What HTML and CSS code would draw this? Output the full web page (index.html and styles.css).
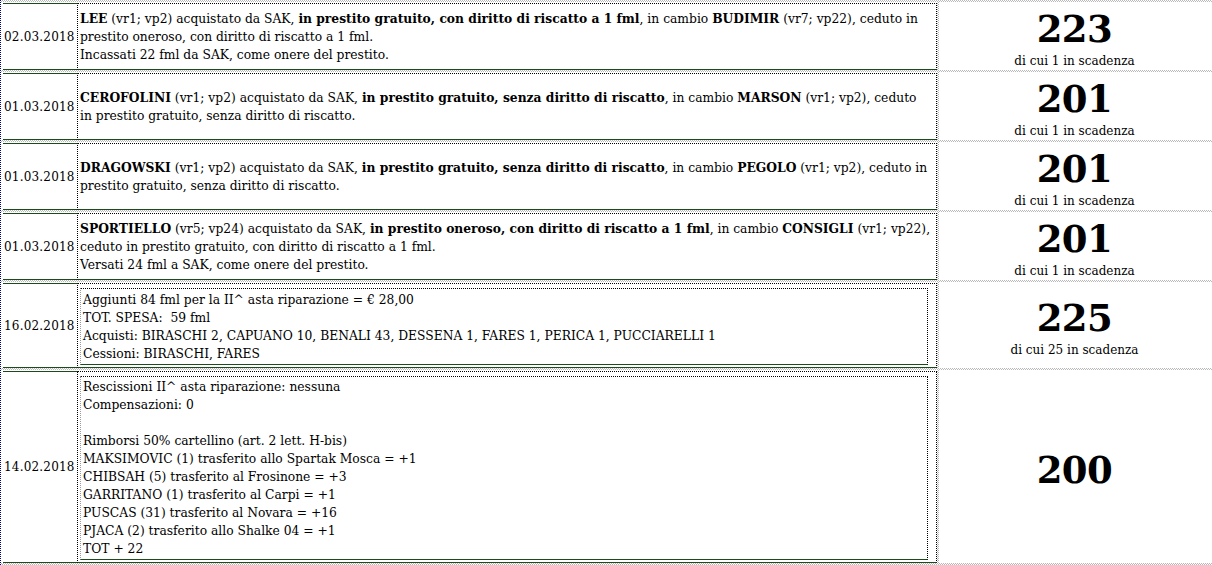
FILE: index.html
```html
<!DOCTYPE html>
<html lang="it">
<head>
<meta charset="utf-8">
<title>Movimenti</title>
<link rel="stylesheet" href="styles.css">
</head>
<body>
<div class="sheet">
  <div class="row r-std">
    <div class="date">02.03.2018</div>
    <div class="desc"><p><b>LEE</b> (vr1; vp2) acquistato da SAK, <b>in prestito gratuito, con diritto di riscatto a 1 fml</b>, in cambio <b>BUDIMIR</b> (vr7; vp22), ceduto in prestito oneroso, con diritto di riscatto a 1 fml.<br>Incassati 22 fml da SAK, come onere del prestito.</p></div>
    <div class="gap"></div>
    <div class="total"><div class="num">223</div><div class="sub">di cui 1 in scadenza</div></div>
  </div>
  <div class="row r-std">
    <div class="date">01.03.2018</div>
    <div class="desc"><p><b>CEROFOLINI</b> (vr1; vp2) acquistato da SAK, <b>in prestito gratuito, senza diritto di riscatto</b>, in cambio <b>MARSON</b> (vr1; vp2), ceduto<br>in prestito gratuito, senza diritto di riscatto.</p></div>
    <div class="gap"></div>
    <div class="total"><div class="num">201</div><div class="sub">di cui 1 in scadenza</div></div>
  </div>
  <div class="row r-std">
    <div class="date">01.03.2018</div>
    <div class="desc"><p><b>DRAGOWSKI</b> (vr1; vp2) acquistato da SAK, <b>in prestito gratuito, senza diritto di riscatto</b>, in cambio <b>PEGOLO</b> (vr1; vp2), ceduto in prestito gratuito, senza diritto di riscatto.</p></div>
    <div class="gap"></div>
    <div class="total"><div class="num">201</div><div class="sub">di cui 1 in scadenza</div></div>
  </div>
  <div class="row r-std">
    <div class="date">01.03.2018</div>
    <div class="desc"><p><b>SPORTIELLO</b> (vr5; vp24) acquistato da SAK, <b>in prestito oneroso, con diritto di riscatto a 1 fml</b>, in cambio <b>CONSIGLI</b> (vr1; vp22), ceduto in prestito gratuito, con diritto di riscatto a 1 fml.<br>Versati 24 fml a SAK, come onere del prestito.</p></div>
    <div class="gap"></div>
    <div class="total"><div class="num">201</div><div class="sub">di cui 1 in scadenza</div></div>
  </div>
  <div class="row r-mid">
    <div class="date">16.02.2018</div>
    <div class="desc boxed"><div class="box"><p>Aggiunti 84 fml per la II^ asta riparazione = € 28,00<br>TOT. SPESA:&nbsp; 59 fml<br>Acquisti: BIRASCHI 2, CAPUANO 10, BENALI 43, DESSENA 1, FARES 1, PERICA 1, PUCCIARELLI 1<br>Cessioni: BIRASCHI, FARES</p></div></div>
    <div class="gap"></div>
    <div class="total"><div class="num">225</div><div class="sub">di cui 25 in scadenza</div></div>
  </div>
  <div class="row r-big">
    <div class="date">14.02.2018</div>
    <div class="desc boxed"><div class="box"><p>Rescissioni II^ asta riparazione: nessuna<br>Compensazioni: 0<br><br>Rimborsi 50% cartellino (art. 2 lett. H-bis)<br>MAKSIMOVIC (1) trasferito allo Spartak Mosca = +1<br>CHIBSAH (5) trasferito al Frosinone = +3<br>GARRITANO (1) trasferito al Carpi = +1<br>PUSCAS (31) trasferito al Novara = +16<br>PJACA (2) trasferito allo Shalke 04 = +1<br>TOT + 22</p></div></div>
    <div class="gap"></div>
    <div class="total"><div class="num">200</div></div>
  </div>
</div>
</body>
</html>
```

FILE: styles.css
```css
html, body {
  margin: 0;
  padding: 0;
  background: #ffffff;
}

body {
  font-family: "DejaVu Serif", "Liberation Serif", serif;
  font-size: 12.3px;
  line-height: 18px;
  color: #000000;
  overflow: hidden;
}

.sheet {
  display: flex;
  flex-direction: column;
  gap: 2px;
  padding: 2px 0;
  border-left: 1px dotted #000080;
  background-color: #ffffff;
  background-image: repeating-conic-gradient(#b9b9b9 0 25%, #ffffff 0 50%);
  background-size: 2px 2px;
}

.row {
  display: grid;
  grid-template-columns: 77px 859px 2px 1fr;
  background: #ffffff;
}

.r-std { height: 68px; }
.r-mid { height: 86px; }
.r-big { height: 193px; }

.date {
  margin: 1px 0 0 2px;
  border-top: 1px solid #1d4a1d;
  border-bottom: 1px solid #1d4a1d;
  border-right: 1px dotted #000000;
  display: flex;
  align-items: center;
  padding-left: 1px;
  white-space: nowrap;
  font-size: 12px;
  letter-spacing: 0.2px;
}

.desc {
  margin-top: 1px;
  border-top: 1px dotted #000000;
  border-bottom: 1px solid #1d4a1d;
  border-right: 1px dotted #000000;
  display: flex;
  align-items: center;
  padding: 0 5px 0 2px;
}

.desc p {
  margin: 0;
}

.desc.boxed {
  align-items: stretch;
  padding: 4px 8px 2px 2px;
}

.box {
  flex: 1;
  display: flex;
  align-items: center;
  border-top: 1px dotted #000000;
  border-right: 1px dotted #000000;
  border-left: 1px dotted #9a9a9a;
  border-bottom: 1px solid #1d4a1d;
  padding: 0 4px 0 2px;
}

.gap {
  background-image: repeating-conic-gradient(#b9b9b9 0 25%, #ffffff 0 50%);
  background-size: 2px 2px;
}

.total {
  display: flex;
  flex-direction: column;
  align-items: center;
  justify-content: center;
  padding: 7px 2px 0 0;
}

.num {
  font-weight: bold;
  font-size: 37px;
  line-height: 36px;
  letter-spacing: -0.5px;
}

.sub {
  font-size: 12px;
  line-height: 16px;
  margin-top: 6px;
}
```
